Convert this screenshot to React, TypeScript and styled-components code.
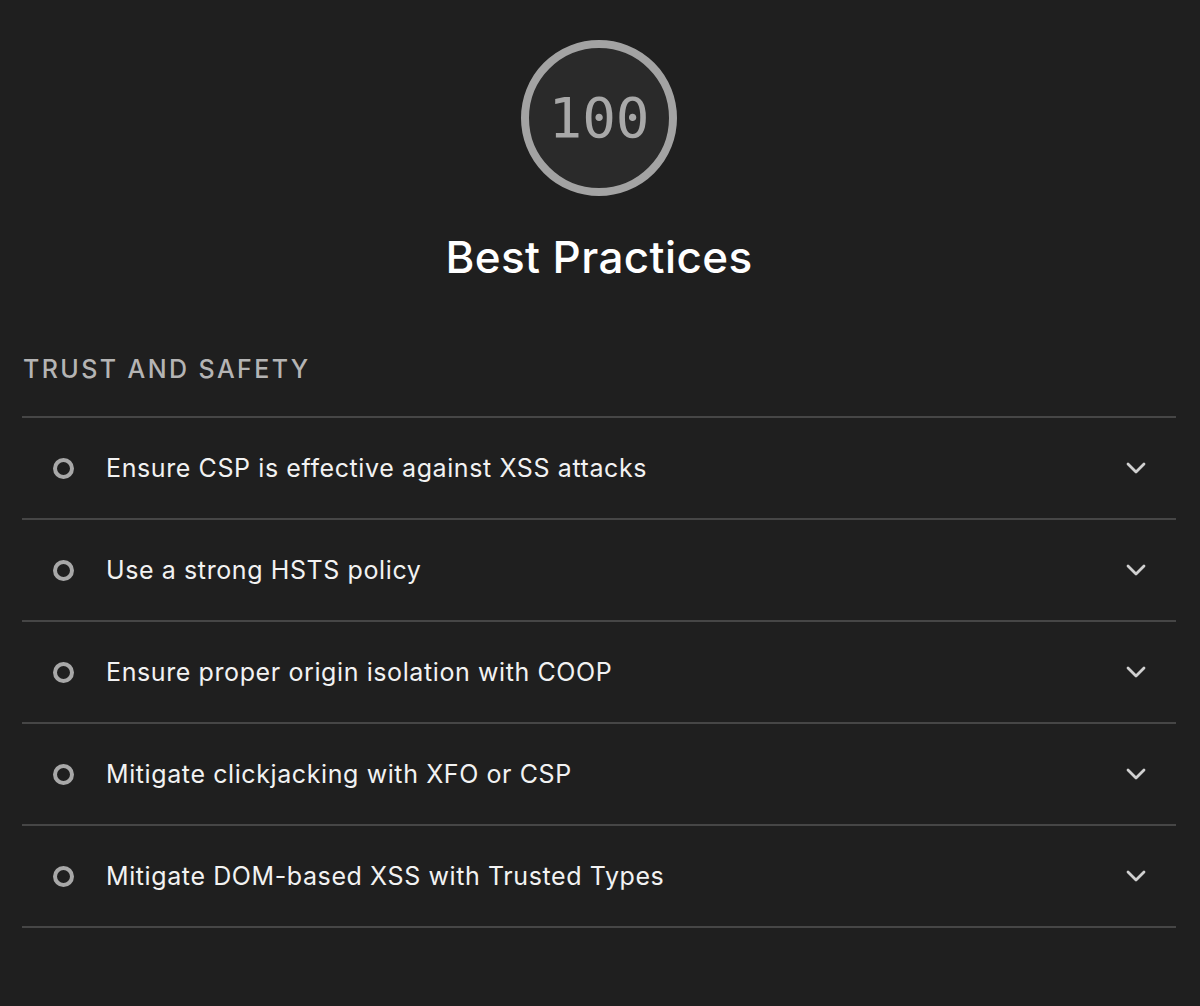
import React from "react";
import styled, { createGlobalStyle } from "styled-components";

const Global = createGlobalStyle`
  html, body { margin: 0; padding: 0; background: #1f1f1f; }
  body { font-family: Inter, "Noto Sans", "Liberation Sans", sans-serif; -webkit-font-smoothing: antialiased; }
`;

const Page = styled.div`
  width: 1200px;
  height: 1006px;
  background: #1f1f1f;
  box-sizing: border-box;
  padding: 40px 24px 0 22px;
  display: flex;
  flex-direction: column;
`;

const Header = styled.header`
  display: flex;
  flex-direction: column;
  align-items: center;
`;

const Gauge = styled.div`
  width: 156px;
  height: 156px;
  box-sizing: border-box;
  border-radius: 50%;
  border: 8px solid #a3a3a3;
  background: #2a2a2a;
  display: flex;
  align-items: center;
  justify-content: center;
`;

const Score = styled.span`
  font-family: "DejaVu Sans Mono", "Liberation Mono", monospace;
  font-size: 56px;
  color: #a8a8a8;
  line-height: 1;
`;

const Title = styled.h1`
  margin: 33px 0 0;
  font-size: 44px;
  font-weight: 500;
  color: #ffffff;
  line-height: 56px;
  letter-spacing: 0.4px;
`;

const SectionTitle = styled.h2`
  margin: 68px 0 0 1px;
  font-size: 25px;
  font-weight: 500;
  letter-spacing: 2.4px;
  color: #b4b4b4;
  line-height: 32px;
  text-transform: uppercase;
`;

const List = styled.ul`
  list-style: none;
  margin: 31px 0 0;
  padding: 0;
  border-top: 2px solid #464646;
`;

const Row = styled.li`
  height: 100px;
  border-bottom: 2px solid #464646;
  display: flex;
  align-items: center;
  padding: 0 30px 0 31px;
`;

const Dot = styled.span`
  width: 21px;
  height: 21px;
  box-sizing: border-box;
  border-radius: 50%;
  border: 4.5px solid #a8a8a8;
  flex: none;
`;

const Label = styled.span`
  margin-left: 32px;
  font-size: 25px;
  letter-spacing: 0.6px;
  color: #f2f2f2;
  flex: 1;
`;

const Chevron = () => (
  <svg width="20" height="12" viewBox="0 0 20 12" fill="none">
    <path d="M2 2l8 8 8-8" stroke="#d0d0d0" strokeWidth="2.8" strokeLinecap="round" strokeLinejoin="round" />
  </svg>
);

const audits = [
  "Ensure CSP is effective against XSS attacks",
  "Use a strong HSTS policy",
  "Ensure proper origin isolation with COOP",
  "Mitigate clickjacking with XFO or CSP",
  "Mitigate DOM-based XSS with Trusted Types",
];

export default function App() {
  return (
    <>
      <Global />
      <Page>
        <Header>
          <Gauge>
            <Score>100</Score>
          </Gauge>
          <Title>Best Practices</Title>
        </Header>
        <SectionTitle>Trust and Safety</SectionTitle>
        <List>
          {audits.map((a) => (
            <Row key={a}>
              <Dot />
              <Label>{a}</Label>
              <Chevron />
            </Row>
          ))}
        </List>
      </Page>
    </>
  );
}
